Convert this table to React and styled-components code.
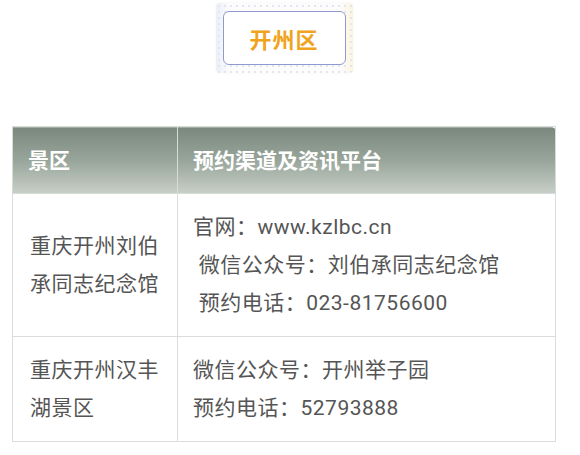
import React from "react";
import styled, { createGlobalStyle } from "styled-components";

const GlobalStyle = createGlobalStyle`
  body {
    margin: 0;
    background: #ffffff;
    font-family: Roboto, "Noto Sans CJK SC", sans-serif;
  }
`;

const rows = [
  {
    name: ["重庆开州刘伯", "承同志纪念馆"],
    info: ["官网：www.kzlbc.cn", " 微信公众号：刘伯承同志纪念馆", " 预约电话：023-81756600"],
  },
  {
    name: ["重庆开州汉丰", "湖景区"],
    info: ["微信公众号：开州举子园", "预约电话：52793888"],
  },
];

const App = () => {
  return (
    <Page>
      <GlobalStyle />
      <BadgeRow>
        <BadgeFrame>
          <Badge>开州区</Badge>
        </BadgeFrame>
      </BadgeRow>
      <Table>
        <thead>
          <tr>
            <HeadCell $first>景区</HeadCell>
            <HeadCell>预约渠道及资讯平台</HeadCell>
          </tr>
        </thead>
        <tbody>
          {rows.map((item, index) => (
            <tr key={index}>
              <NameCell>
                {item.name.map((line, i) => (
                  <Line key={i}>{line}</Line>
                ))}
              </NameCell>
              <InfoCell>
                {item.info.map((line, i) => (
                  <Line key={i}>{line}</Line>
                ))}
              </InfoCell>
            </tr>
          ))}
        </tbody>
      </Table>
    </Page>
  );
};

const Page = styled.div`
  width: 580px;
  height: 455px;
  padding: 3px 24px 0 12px;
  box-sizing: border-box;
`;

const BadgeRow = styled.div`
  display: flex;
  justify-content: center;
`;

const BadgeFrame = styled.div`
  width: 137px;
  height: 70px;
  box-sizing: border-box;
  padding: 8px 7px;
  border-radius: 4px;
  background-color: #fcfcfd;
  background-image:
    radial-gradient(circle, #e3e5ee 0.7px, transparent 1.1px),
    linear-gradient(90deg, rgba(206, 214, 240, 0.35) 0%, transparent 10%, transparent 90%, rgba(250, 230, 170, 0.35) 100%);
  background-size: 6px 6px, 100% 100%;
  box-shadow: 0 0 3px rgba(0, 0, 0, 0.05);
`;

const Badge = styled.div`
  height: 100%;
  box-sizing: border-box;
  border: 1.5px solid #8f9bd0;
  border-radius: 6px;
  background: #ffffff;
  display: flex;
  align-items: center;
  justify-content: center;
  color: #f0a31c;
  font-family: "Noto Sans CJK SC", sans-serif;
  font-weight: 700;
  font-size: 22px;
  letter-spacing: 1px;
`;

const Table = styled.table`
  margin-top: 53px;
  width: 544px;
  border-collapse: collapse;
  color: #555555;
  font-size: 21px;
`;

const HeadCell = styled.th`
  height: 67px;
  padding: 0 0 2px 15px;
  width: ${(p) => (p.$first ? "165px" : "auto")};
  box-sizing: border-box;
  text-align: left;
  color: #ffffff;
  font-family: "Noto Sans CJK SC", sans-serif;
  font-size: 21px;
  font-weight: 700;
  background: linear-gradient(180deg, #7a887d 0%, #98a59a 50%, #c8cfc8 100%);
  border: 1px solid #d8dcd8;
  border-top-right-radius: ${(p) => (p.$first ? "0" : "5px")};
`;

const BodyCell = styled.td`
  border: 1px solid #dcdcdc;
  vertical-align: middle;
  padding: 14px 6px 14px 16px;
  line-height: 38px;
  letter-spacing: 0.5px;
  white-space: pre;
`;

const NameCell = styled(BodyCell)`
  padding-left: 17px;
`;

const InfoCell = styled(BodyCell)`
  padding-left: 15px;
`;

const Line = styled.div``;

export default App;
